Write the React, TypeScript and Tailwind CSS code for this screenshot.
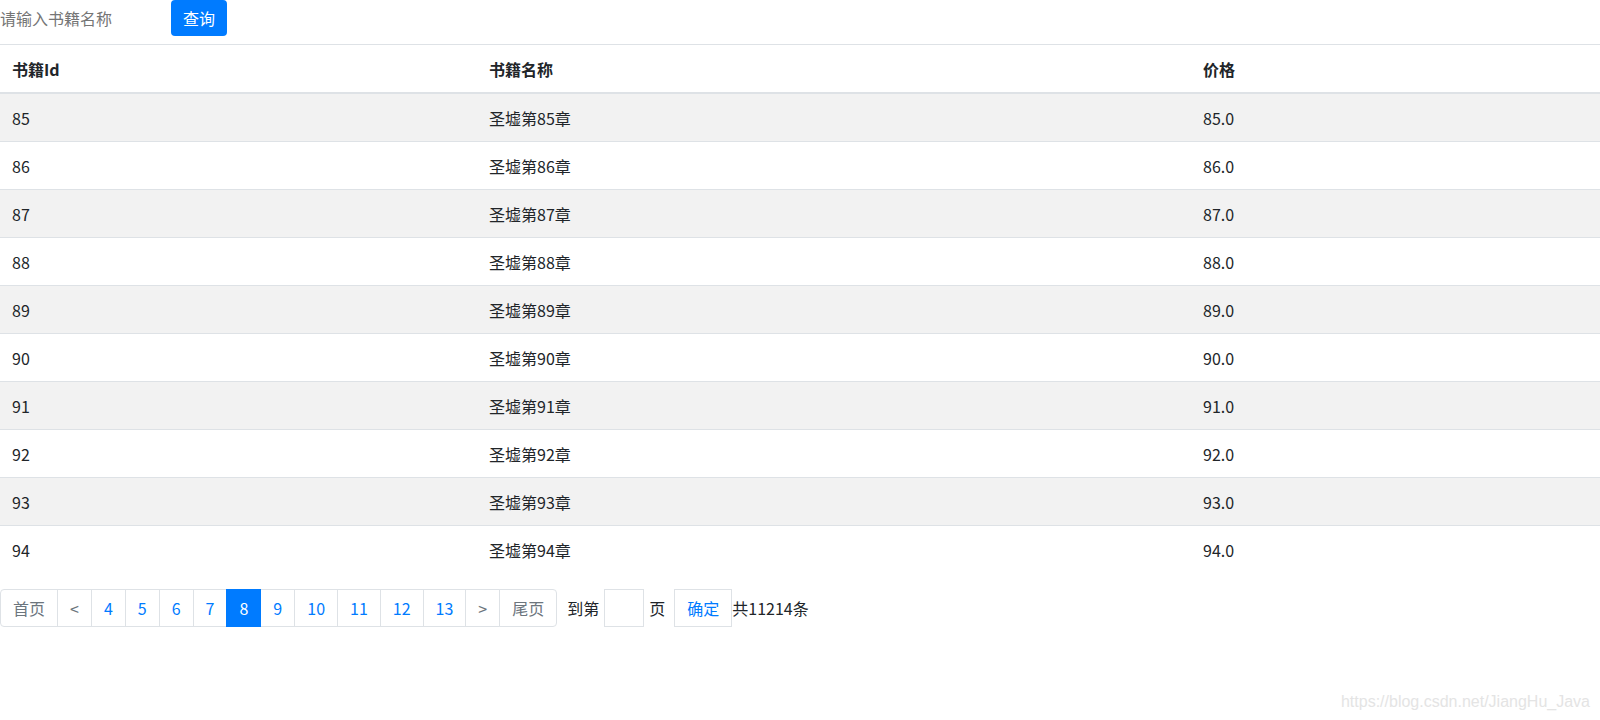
import React from 'react';

const rows = Array.from({ length: 10 }, (_, i) => 85 + i);

const pages = [4, 5, 6, 7, 8, 9, 10, 11, 12, 13];

function PageItem({
  label,
  active,
  muted,
  first,
  last,
}: {
  label: string;
  active?: boolean;
  muted?: boolean;
  first?: boolean;
  last?: boolean;
}) {
  const base = 'h-[38px] px-3 flex items-center justify-center border leading-5';
  const color = active
    ? 'bg-[#007bff] border-[#007bff] text-white z-10'
    : muted
    ? 'bg-white border-[#dee2e6] text-[#6c757d]'
    : 'bg-white border-[#dee2e6] text-[#007bff]';
  return (
    <div
      className={`${base} ${color} ${first ? 'rounded-l' : '-ml-px'} ${last ? 'rounded-r' : ''}`}
    >
      {label}
    </div>
  );
}

export default function App() {
  return (
    <div
      className="relative w-[1600px] h-[720px] bg-white text-[#212529] text-[16px]"
      style={{ fontFamily: '"Noto Sans CJK SC", "Noto Sans", sans-serif' }}
    >
      {/* Search bar */}
      <div className="flex items-start h-9">
        <input
          className="w-[171px] shrink-0 h-9 outline-none placeholder:text-[#757575] bg-transparent"
          placeholder="请输入书籍名称"
        />
        <button className="h-9 w-14 shrink-0 rounded bg-[#007bff] text-white">查询</button>
      </div>

      {/* Book table */}
      <div className="mt-2">
        <div className="grid grid-cols-[477px_714px_1fr] h-[50px] border-t border-b-2 border-[#dee2e6] items-center font-bold">
          <div className="px-3">书籍Id</div>
          <div className="px-3">书籍名称</div>
          <div className="px-3">价格</div>
        </div>
        {rows.map((n, i) => (
          <div
            key={n}
            className={`grid grid-cols-[477px_714px_1fr] items-center ${
              i === 0 ? 'h-[47px]' : 'h-12 border-t border-[#dee2e6]'
            } ${i % 2 === 0 ? 'bg-[#f2f2f2]' : 'bg-white'}`}
          >
            <div className="px-3">{n}</div>
            <div className="px-3">圣墟第{n}章</div>
            <div className="px-3">{n}.0</div>
          </div>
        ))}
      </div>

      {/* Pagination */}
      <div className="mt-4 flex items-center">
        <PageItem label="首页" muted first />
        <PageItem label="<" muted />
        {pages.map((p) => (
          <PageItem key={p} label={String(p)} active={p === 8} />
        ))}
        <PageItem label=">" muted />
        <PageItem label="尾页" muted last />
        <span className="ml-[10px]">到第</span>
        <input className="ml-[5px] w-[40px] h-[38px] border border-[#dee2e6] outline-none" />
        <span className="ml-[5px]">页</span>
        <div className="ml-[9px] h-[38px] px-3 flex items-center border border-[#dee2e6] text-[#007bff]">
          确定
        </div>
        <span>共11214条</span>
      </div>

      {/* Watermark */}
      <div
        className="absolute right-[10px] top-[692px] text-[16px] leading-5 text-[#e4e4e4]"
        style={{ fontFamily: '"Liberation Sans", Arial, sans-serif' }}
      >
        https://blog.csdn.net/JiangHu_Java
      </div>
    </div>
  );
}
